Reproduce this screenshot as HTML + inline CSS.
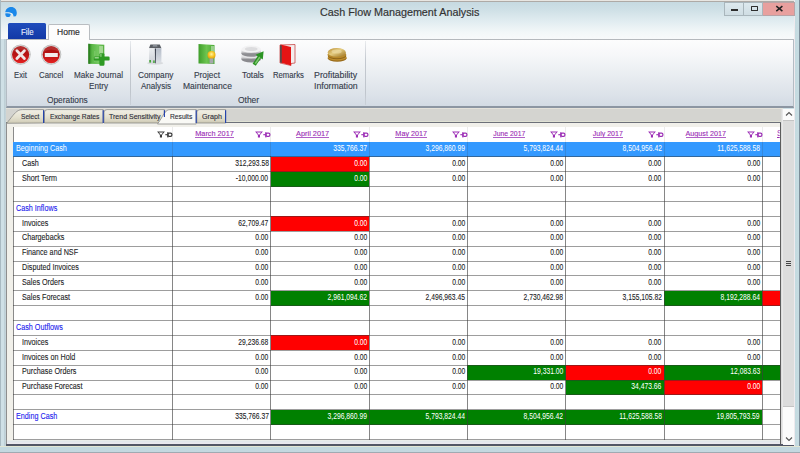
<!DOCTYPE html>
<html><head><meta charset="utf-8"><style>
html,body{margin:0;padding:0;width:800px;height:453px;overflow:hidden;background:#cddfe5;font-family:"Liberation Sans", sans-serif;position:relative}
</style></head><body>
<div style="position:absolute;left:0px;top:0px;width:800px;height:39px;background:linear-gradient(#c4d8e0 0px,#cfe0e6 10px,#e2edf1 22px,#f2f7f8 32px,#f8fafb 39px);"></div>
<div style="position:absolute;left:0px;top:0px;width:800px;height:2px;background:linear-gradient(#e8e6e2 0px,#e8e6e2 0.8px,#aeaaa6 0.8px,#aeaaa6 2px);"></div>
<div style="position:absolute;left:0px;top:39px;width:5.6px;height:414px;background:linear-gradient(90deg,#cfe0e6 0px,#cfe0e6 3.8px,#bccdd4 4.6px,#c4d4da 5.6px);"></div>
<div style="position:absolute;left:0px;top:0px;width:1px;height:453px;background:#a9bac2;"></div>
<div style="position:absolute;left:794.4px;top:0px;width:5.6px;height:453px;background:linear-gradient(90deg,#eeeaee 0px,#eeeaee 0.5px,#c4dae0 0.8px,#c6dce2 4.6px,#7c8c98 4.8px);"></div>
<div style="position:absolute;left:0px;top:445.5px;width:800px;height:7.5px;background:linear-gradient(#e2e6d4 0px,#e2e6d4 1px,#c2d8e0 1px,#c4d8e0 5.5px,#a0aab2 5.5px);"></div>
<svg style="position:absolute;left:0;top:0" width="20" height="20" viewBox="0 0 20 20">
<path d="M5.2 13.2 C5.2 9.4 7.8 7 11.2 7 C14.6 7 16.8 9.6 16.8 12.8 C16.8 14.3 16.4 15.4 15.8 16.2 L13.4 16.6 C13 15 12.2 13.8 11 13.6 L10 16.4 C8.8 17.1 7.4 17.2 6.5 16.8 C5.6 15.9 5.2 14.8 5.2 13.2 Z" fill="#1b88ea"/>
<path d="M5.0 12.3 C8 11.9 10.5 12.3 12.2 13.3 C13 14.1 13.4 15.2 13.6 16.5 L12.8 16.6 C12.5 15.5 12.0 14.7 11.3 14.2 C9.8 13.3 7.6 13.1 5.2 13.4 Z" fill="#e4eef2"/>
</svg>
<div style="position:absolute;top:6.79px;font-size:11px;line-height:11px;color:#333333;white-space:nowrap;-webkit-text-stroke:0.18px #333333;left:320.00px;transform-origin:0 0;transform:scaleX(0.9801);">Cash Flow Management Analysis</div>
<div style="position:absolute;left:724px;top:1.5px;width:20.3px;height:14.8px;background:linear-gradient(#dde9ee,#cfdde3);border:1px solid #a9b6bc;box-sizing:border-box;"></div>
<div style="position:absolute;left:744.3px;top:1.5px;width:18.6px;height:14.8px;background:linear-gradient(#dde9ee,#cfdde3);border:1px solid #a9b6bc;border-left:none;box-sizing:border-box;"></div>
<div style="position:absolute;left:762.9px;top:1.5px;width:32.6px;height:14.8px;background:#e8a09e;border:1px solid #b9a3a6;border-left:none;box-sizing:border-box;"></div>
<div style="position:absolute;left:731px;top:9.4px;width:7px;height:1.7px;background:#2e2e2e;"></div>
<div style="position:absolute;left:751px;top:6.2px;width:6.6px;height:4.9px;border:1.4px solid #2e2e2e;box-sizing:border-box;border-top-width:1.9px;border-radius:0.6px;"></div>
<svg style="position:absolute;left:775px;top:5px" width="9" height="7" viewBox="0 0 9 7"><path d="M1.3 1.2 L7.4 6.2 M7.4 1.2 L1.3 6.2" stroke="#222" stroke-width="1.5"/></svg>
<div style="position:absolute;left:5.6px;top:106px;width:777px;height:16.5px;background:linear-gradient(#8c96a2 0px,#8c96a2 2px,#e4e2da 2px,#e4e2da 3px,#d4d4d0 3px,#d4d4d0 14.5px,#e0e2d4 14.5px);"></div>
<div style="position:absolute;left:5.6px;top:38.8px;width:788.8px;height:69.2px;background:linear-gradient(#fdfdfd 0px,#f6f7f9 15px,#e9edf1 35px,#dce2e9 55px,#d3dbe4 66px);border-top:1px solid #b5b9bd;border-bottom:2px solid #8c96a2;border-left:1px solid #b4bcc4;border-right:1px solid #b4bcc4;box-sizing:border-box;"></div>
<div style="position:absolute;left:7.5px;top:23px;width:38.1px;height:16.3px;background:linear-gradient(#1f4cbc,#1239a6);border-radius:1.5px 1.5px 0 0;"></div>
<div style="position:absolute;top:27.59px;font-size:8.4px;line-height:8.4px;color:#e8eefc;white-space:nowrap;-webkit-text-stroke:0.12px #e8eefc;left:20.70px;transform-origin:0 0;transform:scaleX(0.9383);">File</div>
<div style="position:absolute;left:47.5px;top:23.6px;width:42.8px;height:16.5px;background:#fdfdfd;border:1px solid #b9bdc1;border-bottom:none;border-radius:2px 2px 0 0;box-sizing:border-box;"></div>
<div style="position:absolute;top:27.99px;font-size:8.4px;line-height:8.4px;color:#2e2e2e;white-space:nowrap;-webkit-text-stroke:0.16px #2e2e2e;left:57.40px;transform-origin:0 0;transform:scaleX(1.0175);">Home</div>
<div style="position:absolute;left:130.3px;top:41px;width:1px;height:63.5px;background:linear-gradient(rgba(190,196,204,0.3),#c3c8cf 30%,#bfc5cc 80%,rgba(190,196,204,0.5));"></div>
<div style="position:absolute;left:365.1px;top:41px;width:1px;height:63.5px;background:linear-gradient(rgba(190,196,204,0.3),#c3c8cf 30%,#bfc5cc 80%,rgba(190,196,204,0.5));"></div>
<div style="position:absolute;top:71.05px;font-size:8.8px;line-height:8.8px;color:#343b4a;white-space:nowrap;-webkit-text-stroke:0.12px #343b4a;left:13.80px;transform-origin:0 0;transform:scaleX(0.8862);">Exit</div>
<div style="position:absolute;top:71.05px;font-size:8.8px;line-height:8.8px;color:#343b4a;white-space:nowrap;-webkit-text-stroke:0.12px #343b4a;left:38.70px;transform-origin:0 0;transform:scaleX(0.8871);">Cancel</div>
<div style="position:absolute;top:71.05px;font-size:8.8px;line-height:8.8px;color:#343b4a;white-space:nowrap;-webkit-text-stroke:0.12px #343b4a;left:74.00px;transform-origin:0 0;transform:scaleX(0.9276);">Make Journal</div>
<div style="position:absolute;top:81.95px;font-size:8.8px;line-height:8.8px;color:#343b4a;white-space:nowrap;-webkit-text-stroke:0.12px #343b4a;left:89.00px;transform-origin:0 0;transform:scaleX(0.9250);">Entry</div>
<div style="position:absolute;top:95.65px;font-size:8.8px;line-height:8.8px;color:#343b4a;white-space:nowrap;-webkit-text-stroke:0.12px #343b4a;left:47.00px;transform-origin:0 0;transform:scaleX(0.9478);">Operations</div>
<div style="position:absolute;top:71.05px;font-size:8.8px;line-height:8.8px;color:#343b4a;white-space:nowrap;-webkit-text-stroke:0.12px #343b4a;left:137.90px;transform-origin:0 0;transform:scaleX(0.9399);">Company</div>
<div style="position:absolute;top:81.95px;font-size:8.8px;line-height:8.8px;color:#343b4a;white-space:nowrap;-webkit-text-stroke:0.12px #343b4a;left:141.00px;transform-origin:0 0;transform:scaleX(0.9155);">Analysis</div>
<div style="position:absolute;top:71.05px;font-size:8.8px;line-height:8.8px;color:#343b4a;white-space:nowrap;-webkit-text-stroke:0.12px #343b4a;left:194.00px;transform-origin:0 0;transform:scaleX(0.9493);">Project</div>
<div style="position:absolute;top:81.95px;font-size:8.8px;line-height:8.8px;color:#343b4a;white-space:nowrap;-webkit-text-stroke:0.12px #343b4a;left:183.00px;transform-origin:0 0;transform:scaleX(0.9704);">Maintenance</div>
<div style="position:absolute;top:71.05px;font-size:8.8px;line-height:8.8px;color:#343b4a;white-space:nowrap;-webkit-text-stroke:0.12px #343b4a;left:241.60px;transform-origin:0 0;transform:scaleX(0.9483);">Totals</div>
<div style="position:absolute;top:71.05px;font-size:8.8px;line-height:8.8px;color:#343b4a;white-space:nowrap;-webkit-text-stroke:0.12px #343b4a;left:272.80px;transform-origin:0 0;transform:scaleX(0.8777);">Remarks</div>
<div style="position:absolute;top:71.05px;font-size:8.8px;line-height:8.8px;color:#343b4a;white-space:nowrap;-webkit-text-stroke:0.12px #343b4a;left:314.40px;transform-origin:0 0;transform:scaleX(1.0038);">Profitability</div>
<div style="position:absolute;top:81.95px;font-size:8.8px;line-height:8.8px;color:#343b4a;white-space:nowrap;-webkit-text-stroke:0.12px #343b4a;left:313.50px;transform-origin:0 0;transform:scaleX(0.9927);">Information</div>
<div style="position:absolute;top:95.65px;font-size:8.8px;line-height:8.8px;color:#343b4a;white-space:nowrap;-webkit-text-stroke:0.12px #343b4a;left:237.90px;transform-origin:0 0;transform:scaleX(0.9587);">Other</div>
<svg style="position:absolute;left:10px;top:44px" width="22" height="22" viewBox="0 0 22 22">
<defs><linearGradient id="rg1" x1="0" x2="0" y1="0" y2="1"><stop offset="0" stop-color="#a81010"/><stop offset="0.5" stop-color="#b81414"/><stop offset="1" stop-color="#e42020"/></linearGradient></defs>
<circle cx="10.65" cy="10.6" r="10.1" fill="#bcbcbc"/>
<circle cx="10.65" cy="10.6" r="9.3" fill="#dedede"/>
<circle cx="10.65" cy="10.6" r="8.6" fill="url(#rg1)"/>
<path d="M2.5 8 Q10.65 3 18.8 8 Q17 2 10.65 1.9 Q4.3 2 2.5 8Z" fill="#fff" opacity="0.12"/>
<path d="M6.9 6.7 L14.4 14.4 M14.4 6.7 L6.9 14.4" stroke="#efe6e6" stroke-width="2.8" stroke-linecap="round"/>
</svg>
<svg style="position:absolute;left:40px;top:44px" width="22" height="22" viewBox="0 0 22 22">
<defs><linearGradient id="rg2" x1="0" x2="0" y1="0" y2="1"><stop offset="0" stop-color="#a81010"/><stop offset="0.5" stop-color="#b81414"/><stop offset="1" stop-color="#e42020"/></linearGradient></defs>
<circle cx="11.2" cy="10.6" r="10.1" fill="#bcbcbc"/>
<circle cx="11.2" cy="10.6" r="9.3" fill="#dedede"/>
<circle cx="11.2" cy="10.6" r="8.6" fill="url(#rg2)"/>
<path d="M3 8 Q11.2 3 19.4 8 Q17.5 2 11.2 1.9 Q4.9 2 3 8Z" fill="#fff" opacity="0.12"/>
<rect x="4.8" y="9" width="13" height="4" fill="#f2ecec"/>
</svg>
<svg style="position:absolute;left:87px;top:43px" width="24" height="24" viewBox="0 0 24 24">
<defs><linearGradient id="gb1" x1="0" x2="1"><stop offset="0" stop-color="#2f8a22"/><stop offset="0.25" stop-color="#5cb848"/><stop offset="0.6" stop-color="#74c860"/><stop offset="1" stop-color="#56b040"/></linearGradient></defs>
<path d="M1.3 0.8 L17.3 1.8 L17.3 21.2 L1.3 20.8 Z" fill="url(#gb1)"/>
<path d="M1.3 0.8 L3.2 1.0 L3.2 20.9 L1.3 20.8 Z" fill="#2a7a1e" opacity="0.7"/>
<rect x="12.2" y="3" width="3.8" height="10" fill="#b8e2a8" opacity="0.75"/>
<rect x="7.2" y="8" width="1.2" height="11" fill="#8ed07a" opacity="0.5"/>
<rect x="6.8" y="13.6" width="15.8" height="4" rx="1.2" fill="#2e9a24"/>
<rect x="12.4" y="10.2" width="5" height="12.6" rx="1" fill="#2e9a24"/>
<rect x="7.6" y="14.1" width="4.2" height="1.4" fill="#c0e8b0" opacity="0.8"/>
<rect x="13.2" y="10.8" width="1.4" height="3" fill="#a8dc98" opacity="0.7"/>
</svg>
<svg style="position:absolute;left:146px;top:43px" width="18" height="22" viewBox="0 0 18 22">
<defs><linearGradient id="lf" x1="0" x2="0" y1="0" y2="1"><stop offset="0" stop-color="#f0f2f4"/><stop offset="1" stop-color="#c8ccd2"/></linearGradient>
<linearGradient id="rf" x1="0" x2="0" y1="0" y2="1"><stop offset="0" stop-color="#b4bcc8"/><stop offset="1" stop-color="#dce0e6"/></linearGradient></defs>
<ellipse cx="9.2" cy="20.2" rx="8" ry="1.6" fill="#d2d4d8" opacity="0.8"/>
<path d="M4.4 1.4 L13.8 1.4 L15.4 5.2 L3 5.2 Z" fill="#5a5e64"/>
<path d="M7 2.2 L11 2.2 L11.6 3.6 L6.6 3.6 Z" fill="#9aa0a8"/>
<path d="M3 5.2 L9.3 5.6 L9.3 20.2 L3 19.2 Z" fill="url(#lf)"/>
<path d="M9.3 5.6 L15.4 5.2 L15.4 19.2 L9.3 20.2 Z" fill="url(#rf)"/>
<path d="M5.2 6 L5.2 18 M7.2 6 L7.2 18" stroke="#d8dce2" stroke-width="0.5"/>
<path d="M8.8 5.6 L10 5.6 L9.8 20.2 L9.1 20.2 Z" fill="#3c4250"/>
<rect x="3.3" y="17" width="1.7" height="2.6" fill="#46a83a"/>
<rect x="7.2" y="17.4" width="1.5" height="2.6" fill="#46a83a"/>
</svg>
<svg style="position:absolute;left:197px;top:43px" width="22" height="24" viewBox="0 0 22 24">
<defs><linearGradient id="gb2" x1="0" x2="1"><stop offset="0" stop-color="#3f9e2a"/><stop offset="0.5" stop-color="#6cc450"/><stop offset="1" stop-color="#4aa836"/></linearGradient>
<radialGradient id="bulb" cx="0.5" cy="0.4" r="0.6"><stop offset="0" stop-color="#fff2a0"/><stop offset="0.6" stop-color="#f5c21c"/><stop offset="1" stop-color="#e09a10"/></radialGradient></defs>
<path d="M1.5 1 L17.5 2 L17.5 21 L1.5 20.5 Z" fill="url(#gb2)"/>
<rect x="14" y="3" width="3" height="8" fill="#c8e8c0" opacity="0.6"/>
<circle cx="14.5" cy="12" r="4" fill="url(#bulb)"/>
<rect x="12.6" y="15.5" width="3.8" height="5" fill="#a6a8ac"/>
</svg>
<svg style="position:absolute;left:240px;top:43px" width="25" height="24" viewBox="0 0 25 24">
<defs><linearGradient id="sv" x1="0" x2="0" y1="0" y2="1"><stop offset="0" stop-color="#fafafa"/><stop offset="0.6" stop-color="#d2d2d4"/><stop offset="1" stop-color="#9a9a9e"/></linearGradient></defs>
<ellipse cx="11.2" cy="16.2" rx="9.8" ry="3.4" fill="#8a8a8e"/>
<rect x="1.4" y="12" width="19.6" height="4.2" fill="url(#sv)"/>
<ellipse cx="11.2" cy="12" rx="9.8" ry="3.2" fill="#e4e4e6"/>
<ellipse cx="11.2" cy="10.6" rx="9.8" ry="3.2" fill="#8e8e92"/>
<rect x="1.4" y="6.2" width="19.6" height="4.4" fill="url(#sv)"/>
<ellipse cx="11.2" cy="6.2" rx="9.8" ry="3.6" fill="#f2f2f3"/>
<ellipse cx="11.2" cy="6.0" rx="6.4" ry="2.0" fill="#dcdcde"/>
<path d="M12.6 20.8 L17.6 13.2 L15.6 11.8 L23.6 8.2 L22.8 16.6 L20.8 15.2 L15.8 22.8 Z" fill="#2c9424"/>
<path d="M14.6 20.2 L19.2 13.6 L20.4 14.4 L16.0 21.0 Z" fill="#9ad888" opacity="0.75"/>
</svg>
<svg style="position:absolute;left:278px;top:43px" width="20" height="24" viewBox="0 0 20 24">
<path d="M2 2 L17 1.5 L17 20 L13 20.5 L13 22.5 L2 20 Z" fill="#f4eeee" stroke="#c84848" stroke-width="0.8"/>
<path d="M2.5 1.5 L13 4 L13 22.5 L2.5 19.5 Z" fill="#e41414"/>
<path d="M2 2 L3.8 2.4 L3.8 20 L2 19.6 Z" fill="#5a4a4a"/>
</svg>
<svg style="position:absolute;left:326px;top:46px" width="22" height="18" viewBox="0 0 22 18">
<defs><linearGradient id="gd" x1="0" x2="1" y1="0" y2="1"><stop offset="0" stop-color="#b88a30"/><stop offset="0.45" stop-color="#e4cc80"/><stop offset="1" stop-color="#9a7020"/></linearGradient></defs>
<ellipse cx="11.2" cy="12.2" rx="9.3" ry="3.6" fill="#9a6c1c"/>
<ellipse cx="11.2" cy="11.2" rx="9.3" ry="3.4" fill="#c09030"/>
<ellipse cx="11.0" cy="9.8" rx="9.3" ry="3.4" fill="#8e6418"/>
<ellipse cx="10.9" cy="8.6" rx="9.3" ry="3.6" fill="#b88a2c"/>
<ellipse cx="10.8" cy="6.4" rx="9.1" ry="4.4" fill="url(#gd)"/>
<ellipse cx="10.6" cy="5.4" rx="5" ry="2" fill="#f0e2b0" opacity="0.55"/>
</svg>
<div style="position:absolute;left:6.2px;top:122.1px;width:775px;height:322.5px;background:linear-gradient(#f1f0ea 0px,#f1f0ea 317px,#dfe6ea 318px,#ece8f0 321px);border-left:1px solid #8e8e8e;border-top:1.4px solid #6c7078;box-sizing:border-box;"></div>
<div style="position:absolute;left:6.2px;top:444.0px;width:788.2px;height:1.5px;background:#525666;"></div>
<div style="position:absolute;left:12.6px;top:126.5px;width:768.4px;height:313.5px;background:#fff;border-left:1px solid #8a8a8a;box-sizing:border-box;"></div>
<div style="position:absolute;left:780px;top:123.4px;width:1.0px;height:321px;background:#5c5c5c;"></div>
<div style="position:absolute;left:781px;top:109px;width:1.8px;height:335.2px;background:linear-gradient(90deg,#d6d6d6,#eeeeee);"></div>
<div style="position:absolute;left:782.6px;top:109px;width:11.8px;height:335.5px;background:#fbfbfb;"></div>
<div style="position:absolute;left:782.6px;top:120.2px;width:11.8px;height:287.2px;background:#dcdcdc;border-top:1px solid #c4c4c4;border-bottom:1px solid #c4c4c4;box-sizing:border-box;"></div>
<svg style="position:absolute;left:785px;top:111px" width="8" height="6" viewBox="0 0 8 6"><path d="M1 4.5 L4 1.5 L7 4.5" stroke="#555" stroke-width="1.1" fill="none"/></svg>
<svg style="position:absolute;left:785px;top:436px" width="8" height="6" viewBox="0 0 8 6"><path d="M1 1.5 L4 4.5 L7 1.5" stroke="#555" stroke-width="1.1" fill="none"/></svg>
<div style="position:absolute;left:786px;top:261px;width:5px;height:1px;background:#444;"></div>
<div style="position:absolute;left:786px;top:263px;width:5px;height:1px;background:#444;"></div>
<div style="position:absolute;left:786px;top:265px;width:5px;height:1px;background:#444;"></div>
<svg style="position:absolute;left:0;top:0" width="240" height="130" viewBox="0 0 240 130">
<defs><linearGradient id="tb" x1="0" x2="0" y1="0" y2="1"><stop offset="0" stop-color="#f2f0e6"/><stop offset="0.55" stop-color="#e4e1d0"/><stop offset="0.85" stop-color="#d7d3bf"/><stop offset="1" stop-color="#c9c5b0"/></linearGradient></defs>
<path d="M6.6 123.3 C11.5 117.5 14.5 112.6 18.2 110.6 Q19.8 109.6 22.5 109.6 L43.6 109.6 L43.6 123 Z" fill="url(#tb)" stroke="#8a8a88" stroke-width="0.8"/>
<path d="M44.5 123 L44.5 112 Q44.8 109.6 47.5 109.6 L103.2 109.6 L103.2 123 Z" fill="url(#tb)" stroke="#8a8a88" stroke-width="0.8"/>
<path d="M104 123 L104 112 Q104.3 109.6 107 109.6 L164.4 109.6 L164.4 123 Z" fill="url(#tb)" stroke="#8a8a88" stroke-width="0.8"/>
<path d="M196.8 123 L196.8 112 Q197.1 109.6 199.8 109.6 L225.6 109.6 L225.6 123 Z" fill="url(#tb)" stroke="#8a8a88" stroke-width="0.8"/>
<path d="M157.5 124 C161 119.5 163.5 113.5 166.5 110.8 Q167.8 109.6 170 109.6 L196.2 109.6 L196.2 124 Z" fill="#f9f9f5" stroke="#8a8a88" stroke-width="0.8"/>
<path d="M43.6 110.2 L43.6 123" stroke="#1f3fae" stroke-width="1.1"/>
<path d="M103.2 110.2 L103.2 123" stroke="#1f3fae" stroke-width="1.1"/>
<path d="M164.4 110.2 L164.4 117" stroke="#1f3fae" stroke-width="1.1"/>
<path d="M196.2 110.2 L196.2 123" stroke="#1f3fae" stroke-width="1.1"/>
<path d="M225.6 110.2 L225.6 123" stroke="#1f3fae" stroke-width="1.1"/>
</svg>
<div style="position:absolute;top:113.22px;font-size:7.3px;line-height:7.3px;color:#2e2e3a;white-space:nowrap;-webkit-text-stroke:0.12px #2e2e3a;left:21.40px;transform-origin:0 0;transform:scaleX(0.9019);">Select</div>
<div style="position:absolute;top:113.22px;font-size:7.3px;line-height:7.3px;color:#2e2e3a;white-space:nowrap;-webkit-text-stroke:0.12px #2e2e3a;left:49.50px;transform-origin:0 0;transform:scaleX(0.9241);">Exchange Rates</div>
<div style="position:absolute;top:113.22px;font-size:7.3px;line-height:7.3px;color:#2e2e3a;white-space:nowrap;-webkit-text-stroke:0.12px #2e2e3a;left:108.80px;transform-origin:0 0;transform:scaleX(0.9611);">Trend Sensitivity</div>
<div style="position:absolute;top:113.22px;font-size:7.3px;line-height:7.3px;color:#2e2e3a;white-space:nowrap;-webkit-text-stroke:0.12px #2e2e3a;left:170.30px;transform-origin:0 0;transform:scaleX(0.9161);">Results</div>
<div style="position:absolute;top:113.22px;font-size:7.3px;line-height:7.3px;color:#2e2e3a;white-space:nowrap;-webkit-text-stroke:0.12px #2e2e3a;left:202.00px;transform-origin:0 0;transform:scaleX(0.9808);">Graph</div>
<div style="position:absolute;left:13.2px;top:142.0px;width:767.0px;height:14.88px;background:#3399ff;"></div>
<div style="position:absolute;left:270.8px;top:156.88px;width:98.30000000000001px;height:14.88px;background:#ff0000;"></div>
<div style="position:absolute;left:270.8px;top:171.76px;width:98.30000000000001px;height:14.88px;background:#008000;"></div>
<div style="position:absolute;left:270.8px;top:216.4px;width:98.30000000000001px;height:14.88px;background:#ff0000;"></div>
<div style="position:absolute;left:270.8px;top:290.8px;width:98.30000000000001px;height:14.88px;background:#008000;"></div>
<div style="position:absolute;left:664.0px;top:290.8px;width:98.29999999999995px;height:14.88px;background:#008000;"></div>
<div style="position:absolute;left:762.3px;top:290.8px;width:17.90000000000009px;height:14.88px;background:#ff0000;"></div>
<div style="position:absolute;left:270.8px;top:335.44px;width:98.30000000000001px;height:14.88px;background:#ff0000;"></div>
<div style="position:absolute;left:467.4px;top:365.20000000000005px;width:98.30000000000007px;height:14.88px;background:#008000;"></div>
<div style="position:absolute;left:565.7px;top:365.20000000000005px;width:98.29999999999995px;height:14.88px;background:#ff0000;"></div>
<div style="position:absolute;left:664.0px;top:365.20000000000005px;width:98.29999999999995px;height:14.88px;background:#008000;"></div>
<div style="position:absolute;left:762.3px;top:365.20000000000005px;width:17.90000000000009px;height:14.88px;background:#008000;"></div>
<div style="position:absolute;left:565.7px;top:380.08000000000004px;width:98.29999999999995px;height:14.88px;background:#008000;"></div>
<div style="position:absolute;left:664.0px;top:380.08000000000004px;width:98.29999999999995px;height:14.88px;background:#ff0000;"></div>
<div style="position:absolute;left:270.8px;top:409.84000000000003px;width:98.30000000000001px;height:14.88px;background:#008000;"></div>
<div style="position:absolute;left:369.1px;top:409.84000000000003px;width:98.29999999999995px;height:14.88px;background:#008000;"></div>
<div style="position:absolute;left:467.4px;top:409.84000000000003px;width:98.30000000000007px;height:14.88px;background:#008000;"></div>
<div style="position:absolute;left:565.7px;top:409.84000000000003px;width:98.29999999999995px;height:14.88px;background:#008000;"></div>
<div style="position:absolute;left:664.0px;top:409.84000000000003px;width:98.29999999999995px;height:14.88px;background:#008000;"></div>
<div style="position:absolute;left:13.2px;top:156.38px;width:767.0px;height:1px;background:rgba(50,50,50,0.48);"></div>
<div style="position:absolute;left:13.2px;top:171.26px;width:767.0px;height:1px;background:rgba(50,50,50,0.48);"></div>
<div style="position:absolute;left:13.2px;top:186.14px;width:767.0px;height:1px;background:rgba(50,50,50,0.48);"></div>
<div style="position:absolute;left:13.2px;top:201.02px;width:767.0px;height:1px;background:rgba(50,50,50,0.48);"></div>
<div style="position:absolute;left:13.2px;top:215.9px;width:767.0px;height:1px;background:rgba(50,50,50,0.48);"></div>
<div style="position:absolute;left:13.2px;top:230.78px;width:767.0px;height:1px;background:rgba(50,50,50,0.48);"></div>
<div style="position:absolute;left:13.2px;top:245.66000000000003px;width:767.0px;height:1px;background:rgba(50,50,50,0.48);"></div>
<div style="position:absolute;left:13.2px;top:260.54px;width:767.0px;height:1px;background:rgba(50,50,50,0.48);"></div>
<div style="position:absolute;left:13.2px;top:275.42px;width:767.0px;height:1px;background:rgba(50,50,50,0.48);"></div>
<div style="position:absolute;left:13.2px;top:290.3px;width:767.0px;height:1px;background:rgba(50,50,50,0.48);"></div>
<div style="position:absolute;left:13.2px;top:305.18px;width:767.0px;height:1px;background:rgba(50,50,50,0.48);"></div>
<div style="position:absolute;left:13.2px;top:320.06px;width:767.0px;height:1px;background:rgba(50,50,50,0.48);"></div>
<div style="position:absolute;left:13.2px;top:334.94px;width:767.0px;height:1px;background:rgba(50,50,50,0.48);"></div>
<div style="position:absolute;left:13.2px;top:349.82000000000005px;width:767.0px;height:1px;background:rgba(50,50,50,0.48);"></div>
<div style="position:absolute;left:13.2px;top:364.70000000000005px;width:767.0px;height:1px;background:rgba(50,50,50,0.48);"></div>
<div style="position:absolute;left:13.2px;top:379.58000000000004px;width:767.0px;height:1px;background:rgba(50,50,50,0.48);"></div>
<div style="position:absolute;left:13.2px;top:394.46000000000004px;width:767.0px;height:1px;background:rgba(50,50,50,0.48);"></div>
<div style="position:absolute;left:13.2px;top:409.34000000000003px;width:767.0px;height:1px;background:rgba(50,50,50,0.48);"></div>
<div style="position:absolute;left:13.2px;top:424.22px;width:767.0px;height:1px;background:rgba(50,50,50,0.48);"></div>
<div style="position:absolute;left:13.2px;top:439.1px;width:767.0px;height:1px;background:rgba(50,50,50,0.48);"></div>
<div style="position:absolute;left:172.0px;top:142.0px;width:1px;height:297.6px;background:rgba(60,60,60,0.62);"></div>
<div style="position:absolute;left:172.0px;top:126.6px;width:1px;height:15.400000000000006px;background:#ececec;"></div>
<div style="position:absolute;left:270.3px;top:142.0px;width:1px;height:297.6px;background:rgba(60,60,60,0.62);"></div>
<div style="position:absolute;left:270.3px;top:126.6px;width:1px;height:15.400000000000006px;background:#ececec;"></div>
<div style="position:absolute;left:368.6px;top:142.0px;width:1px;height:297.6px;background:rgba(60,60,60,0.62);"></div>
<div style="position:absolute;left:368.6px;top:126.6px;width:1px;height:15.400000000000006px;background:#ececec;"></div>
<div style="position:absolute;left:466.9px;top:142.0px;width:1px;height:297.6px;background:rgba(60,60,60,0.62);"></div>
<div style="position:absolute;left:466.9px;top:126.6px;width:1px;height:15.400000000000006px;background:#ececec;"></div>
<div style="position:absolute;left:565.2px;top:142.0px;width:1px;height:297.6px;background:rgba(60,60,60,0.62);"></div>
<div style="position:absolute;left:565.2px;top:126.6px;width:1px;height:15.400000000000006px;background:#ececec;"></div>
<div style="position:absolute;left:663.5px;top:142.0px;width:1px;height:297.6px;background:rgba(60,60,60,0.62);"></div>
<div style="position:absolute;left:663.5px;top:126.6px;width:1px;height:15.400000000000006px;background:#ececec;"></div>
<div style="position:absolute;left:761.8px;top:142.0px;width:1px;height:297.6px;background:rgba(60,60,60,0.62);"></div>
<div style="position:absolute;left:761.8px;top:126.6px;width:1px;height:15.400000000000006px;background:#ececec;"></div>
<div style="position:absolute;left:13.2px;top:142.0px;width:767.0px;height:14.38px;background:rgba(51,153,255,0.72);"></div>
<div style="position:absolute;top:144.19px;font-size:8.4px;line-height:8.4px;color:#fff;white-space:nowrap;-webkit-text-stroke:0.03px #fff;left:15.70px;transform-origin:0 0;transform:scaleX(0.8600);">Beginning Cash</div>
<div style="position:absolute;top:144.19px;font-size:8.4px;line-height:8.4px;color:#fff;white-space:nowrap;-webkit-text-stroke:0.03px #fff;left:324.86px;transform-origin:100% 0;transform:scaleX(0.8050);">335,766.37</div>
<div style="position:absolute;top:144.19px;font-size:8.4px;line-height:8.4px;color:#fff;white-space:nowrap;-webkit-text-stroke:0.03px #fff;left:416.15px;transform-origin:100% 0;transform:scaleX(0.8050);">3,296,860.99</div>
<div style="position:absolute;top:144.19px;font-size:8.4px;line-height:8.4px;color:#fff;white-space:nowrap;-webkit-text-stroke:0.03px #fff;left:514.45px;transform-origin:100% 0;transform:scaleX(0.8050);">5,793,824.44</div>
<div style="position:absolute;top:144.19px;font-size:8.4px;line-height:8.4px;color:#fff;white-space:nowrap;-webkit-text-stroke:0.03px #fff;left:612.75px;transform-origin:100% 0;transform:scaleX(0.8050);">8,504,956.42</div>
<div style="position:absolute;top:144.19px;font-size:8.4px;line-height:8.4px;color:#fff;white-space:nowrap;-webkit-text-stroke:0.03px #fff;left:707.00px;transform-origin:100% 0;transform:scaleX(0.8050);">11,625,588.58</div>
<div style="position:absolute;top:159.07px;font-size:8.4px;line-height:8.4px;color:#1c1c24;white-space:nowrap;-webkit-text-stroke:0.1px #1c1c24;left:21.60px;transform-origin:0 0;transform:scaleX(0.8600);">Cash</div>
<div style="position:absolute;top:159.07px;font-size:8.4px;line-height:8.4px;color:#1c1c24;white-space:nowrap;-webkit-text-stroke:0.1px #1c1c24;left:226.56px;transform-origin:100% 0;transform:scaleX(0.8050);">312,293.58</div>
<div style="position:absolute;top:159.07px;font-size:8.4px;line-height:8.4px;color:#fff;white-space:nowrap;-webkit-text-stroke:0.03px #fff;left:350.55px;transform-origin:100% 0;transform:scaleX(0.8050);">0.00</div>
<div style="position:absolute;top:159.07px;font-size:8.4px;line-height:8.4px;color:#1c1c24;white-space:nowrap;-webkit-text-stroke:0.1px #1c1c24;left:448.85px;transform-origin:100% 0;transform:scaleX(0.8050);">0.00</div>
<div style="position:absolute;top:159.07px;font-size:8.4px;line-height:8.4px;color:#1c1c24;white-space:nowrap;-webkit-text-stroke:0.1px #1c1c24;left:547.15px;transform-origin:100% 0;transform:scaleX(0.8050);">0.00</div>
<div style="position:absolute;top:159.07px;font-size:8.4px;line-height:8.4px;color:#1c1c24;white-space:nowrap;-webkit-text-stroke:0.1px #1c1c24;left:645.45px;transform-origin:100% 0;transform:scaleX(0.8050);">0.00</div>
<div style="position:absolute;top:159.07px;font-size:8.4px;line-height:8.4px;color:#1c1c24;white-space:nowrap;-webkit-text-stroke:0.1px #1c1c24;left:743.75px;transform-origin:100% 0;transform:scaleX(0.8050);">0.00</div>
<div style="position:absolute;top:173.95px;font-size:8.4px;line-height:8.4px;color:#1c1c24;white-space:nowrap;-webkit-text-stroke:0.1px #1c1c24;left:21.60px;transform-origin:0 0;transform:scaleX(0.8600);">Short Term</div>
<div style="position:absolute;top:173.95px;font-size:8.4px;line-height:8.4px;color:#1c1c24;white-space:nowrap;-webkit-text-stroke:0.1px #1c1c24;left:228.43px;transform-origin:100% 0;transform:scaleX(0.8050);">-10,000.00</div>
<div style="position:absolute;top:173.95px;font-size:8.4px;line-height:8.4px;color:#fff;white-space:nowrap;-webkit-text-stroke:0.03px #fff;left:350.55px;transform-origin:100% 0;transform:scaleX(0.8050);">0.00</div>
<div style="position:absolute;top:173.95px;font-size:8.4px;line-height:8.4px;color:#1c1c24;white-space:nowrap;-webkit-text-stroke:0.1px #1c1c24;left:448.85px;transform-origin:100% 0;transform:scaleX(0.8050);">0.00</div>
<div style="position:absolute;top:173.95px;font-size:8.4px;line-height:8.4px;color:#1c1c24;white-space:nowrap;-webkit-text-stroke:0.1px #1c1c24;left:547.15px;transform-origin:100% 0;transform:scaleX(0.8050);">0.00</div>
<div style="position:absolute;top:173.95px;font-size:8.4px;line-height:8.4px;color:#1c1c24;white-space:nowrap;-webkit-text-stroke:0.1px #1c1c24;left:645.45px;transform-origin:100% 0;transform:scaleX(0.8050);">0.00</div>
<div style="position:absolute;top:173.95px;font-size:8.4px;line-height:8.4px;color:#1c1c24;white-space:nowrap;-webkit-text-stroke:0.1px #1c1c24;left:743.75px;transform-origin:100% 0;transform:scaleX(0.8050);">0.00</div>
<div style="position:absolute;top:203.71px;font-size:8.4px;line-height:8.4px;color:#2222ee;white-space:nowrap;-webkit-text-stroke:0.1px #2222ee;left:15.70px;transform-origin:0 0;transform:scaleX(0.8600);">Cash Inflows</div>
<div style="position:absolute;top:218.59px;font-size:8.4px;line-height:8.4px;color:#1c1c24;white-space:nowrap;-webkit-text-stroke:0.1px #1c1c24;left:21.60px;transform-origin:0 0;transform:scaleX(0.8600);">Invoices</div>
<div style="position:absolute;top:218.59px;font-size:8.4px;line-height:8.4px;color:#1c1c24;white-space:nowrap;-webkit-text-stroke:0.1px #1c1c24;left:231.23px;transform-origin:100% 0;transform:scaleX(0.8050);">62,709.47</div>
<div style="position:absolute;top:218.59px;font-size:8.4px;line-height:8.4px;color:#fff;white-space:nowrap;-webkit-text-stroke:0.03px #fff;left:350.55px;transform-origin:100% 0;transform:scaleX(0.8050);">0.00</div>
<div style="position:absolute;top:218.59px;font-size:8.4px;line-height:8.4px;color:#1c1c24;white-space:nowrap;-webkit-text-stroke:0.1px #1c1c24;left:448.85px;transform-origin:100% 0;transform:scaleX(0.8050);">0.00</div>
<div style="position:absolute;top:218.59px;font-size:8.4px;line-height:8.4px;color:#1c1c24;white-space:nowrap;-webkit-text-stroke:0.1px #1c1c24;left:547.15px;transform-origin:100% 0;transform:scaleX(0.8050);">0.00</div>
<div style="position:absolute;top:218.59px;font-size:8.4px;line-height:8.4px;color:#1c1c24;white-space:nowrap;-webkit-text-stroke:0.1px #1c1c24;left:645.45px;transform-origin:100% 0;transform:scaleX(0.8050);">0.00</div>
<div style="position:absolute;top:218.59px;font-size:8.4px;line-height:8.4px;color:#1c1c24;white-space:nowrap;-webkit-text-stroke:0.1px #1c1c24;left:743.75px;transform-origin:100% 0;transform:scaleX(0.8050);">0.00</div>
<div style="position:absolute;top:233.47px;font-size:8.4px;line-height:8.4px;color:#1c1c24;white-space:nowrap;-webkit-text-stroke:0.1px #1c1c24;left:21.60px;transform-origin:0 0;transform:scaleX(0.8600);">Chargebacks</div>
<div style="position:absolute;top:233.47px;font-size:8.4px;line-height:8.4px;color:#1c1c24;white-space:nowrap;-webkit-text-stroke:0.1px #1c1c24;left:252.25px;transform-origin:100% 0;transform:scaleX(0.8050);">0.00</div>
<div style="position:absolute;top:233.47px;font-size:8.4px;line-height:8.4px;color:#1c1c24;white-space:nowrap;-webkit-text-stroke:0.1px #1c1c24;left:350.55px;transform-origin:100% 0;transform:scaleX(0.8050);">0.00</div>
<div style="position:absolute;top:233.47px;font-size:8.4px;line-height:8.4px;color:#1c1c24;white-space:nowrap;-webkit-text-stroke:0.1px #1c1c24;left:448.85px;transform-origin:100% 0;transform:scaleX(0.8050);">0.00</div>
<div style="position:absolute;top:233.47px;font-size:8.4px;line-height:8.4px;color:#1c1c24;white-space:nowrap;-webkit-text-stroke:0.1px #1c1c24;left:547.15px;transform-origin:100% 0;transform:scaleX(0.8050);">0.00</div>
<div style="position:absolute;top:233.47px;font-size:8.4px;line-height:8.4px;color:#1c1c24;white-space:nowrap;-webkit-text-stroke:0.1px #1c1c24;left:645.45px;transform-origin:100% 0;transform:scaleX(0.8050);">0.00</div>
<div style="position:absolute;top:233.47px;font-size:8.4px;line-height:8.4px;color:#1c1c24;white-space:nowrap;-webkit-text-stroke:0.1px #1c1c24;left:743.75px;transform-origin:100% 0;transform:scaleX(0.8050);">0.00</div>
<div style="position:absolute;top:248.35px;font-size:8.4px;line-height:8.4px;color:#1c1c24;white-space:nowrap;-webkit-text-stroke:0.1px #1c1c24;left:21.60px;transform-origin:0 0;transform:scaleX(0.8600);">Finance and NSF</div>
<div style="position:absolute;top:248.35px;font-size:8.4px;line-height:8.4px;color:#1c1c24;white-space:nowrap;-webkit-text-stroke:0.1px #1c1c24;left:252.25px;transform-origin:100% 0;transform:scaleX(0.8050);">0.00</div>
<div style="position:absolute;top:248.35px;font-size:8.4px;line-height:8.4px;color:#1c1c24;white-space:nowrap;-webkit-text-stroke:0.1px #1c1c24;left:350.55px;transform-origin:100% 0;transform:scaleX(0.8050);">0.00</div>
<div style="position:absolute;top:248.35px;font-size:8.4px;line-height:8.4px;color:#1c1c24;white-space:nowrap;-webkit-text-stroke:0.1px #1c1c24;left:448.85px;transform-origin:100% 0;transform:scaleX(0.8050);">0.00</div>
<div style="position:absolute;top:248.35px;font-size:8.4px;line-height:8.4px;color:#1c1c24;white-space:nowrap;-webkit-text-stroke:0.1px #1c1c24;left:547.15px;transform-origin:100% 0;transform:scaleX(0.8050);">0.00</div>
<div style="position:absolute;top:248.35px;font-size:8.4px;line-height:8.4px;color:#1c1c24;white-space:nowrap;-webkit-text-stroke:0.1px #1c1c24;left:645.45px;transform-origin:100% 0;transform:scaleX(0.8050);">0.00</div>
<div style="position:absolute;top:248.35px;font-size:8.4px;line-height:8.4px;color:#1c1c24;white-space:nowrap;-webkit-text-stroke:0.1px #1c1c24;left:743.75px;transform-origin:100% 0;transform:scaleX(0.8050);">0.00</div>
<div style="position:absolute;top:263.23px;font-size:8.4px;line-height:8.4px;color:#1c1c24;white-space:nowrap;-webkit-text-stroke:0.1px #1c1c24;left:21.60px;transform-origin:0 0;transform:scaleX(0.8600);">Disputed Invoices</div>
<div style="position:absolute;top:263.23px;font-size:8.4px;line-height:8.4px;color:#1c1c24;white-space:nowrap;-webkit-text-stroke:0.1px #1c1c24;left:252.25px;transform-origin:100% 0;transform:scaleX(0.8050);">0.00</div>
<div style="position:absolute;top:263.23px;font-size:8.4px;line-height:8.4px;color:#1c1c24;white-space:nowrap;-webkit-text-stroke:0.1px #1c1c24;left:350.55px;transform-origin:100% 0;transform:scaleX(0.8050);">0.00</div>
<div style="position:absolute;top:263.23px;font-size:8.4px;line-height:8.4px;color:#1c1c24;white-space:nowrap;-webkit-text-stroke:0.1px #1c1c24;left:448.85px;transform-origin:100% 0;transform:scaleX(0.8050);">0.00</div>
<div style="position:absolute;top:263.23px;font-size:8.4px;line-height:8.4px;color:#1c1c24;white-space:nowrap;-webkit-text-stroke:0.1px #1c1c24;left:547.15px;transform-origin:100% 0;transform:scaleX(0.8050);">0.00</div>
<div style="position:absolute;top:263.23px;font-size:8.4px;line-height:8.4px;color:#1c1c24;white-space:nowrap;-webkit-text-stroke:0.1px #1c1c24;left:645.45px;transform-origin:100% 0;transform:scaleX(0.8050);">0.00</div>
<div style="position:absolute;top:263.23px;font-size:8.4px;line-height:8.4px;color:#1c1c24;white-space:nowrap;-webkit-text-stroke:0.1px #1c1c24;left:743.75px;transform-origin:100% 0;transform:scaleX(0.8050);">0.00</div>
<div style="position:absolute;top:278.11px;font-size:8.4px;line-height:8.4px;color:#1c1c24;white-space:nowrap;-webkit-text-stroke:0.1px #1c1c24;left:21.60px;transform-origin:0 0;transform:scaleX(0.8600);">Sales Orders</div>
<div style="position:absolute;top:278.11px;font-size:8.4px;line-height:8.4px;color:#1c1c24;white-space:nowrap;-webkit-text-stroke:0.1px #1c1c24;left:252.25px;transform-origin:100% 0;transform:scaleX(0.8050);">0.00</div>
<div style="position:absolute;top:278.11px;font-size:8.4px;line-height:8.4px;color:#1c1c24;white-space:nowrap;-webkit-text-stroke:0.1px #1c1c24;left:350.55px;transform-origin:100% 0;transform:scaleX(0.8050);">0.00</div>
<div style="position:absolute;top:278.11px;font-size:8.4px;line-height:8.4px;color:#1c1c24;white-space:nowrap;-webkit-text-stroke:0.1px #1c1c24;left:448.85px;transform-origin:100% 0;transform:scaleX(0.8050);">0.00</div>
<div style="position:absolute;top:278.11px;font-size:8.4px;line-height:8.4px;color:#1c1c24;white-space:nowrap;-webkit-text-stroke:0.1px #1c1c24;left:547.15px;transform-origin:100% 0;transform:scaleX(0.8050);">0.00</div>
<div style="position:absolute;top:278.11px;font-size:8.4px;line-height:8.4px;color:#1c1c24;white-space:nowrap;-webkit-text-stroke:0.1px #1c1c24;left:645.45px;transform-origin:100% 0;transform:scaleX(0.8050);">0.00</div>
<div style="position:absolute;top:278.11px;font-size:8.4px;line-height:8.4px;color:#1c1c24;white-space:nowrap;-webkit-text-stroke:0.1px #1c1c24;left:743.75px;transform-origin:100% 0;transform:scaleX(0.8050);">0.00</div>
<div style="position:absolute;top:292.99px;font-size:8.4px;line-height:8.4px;color:#1c1c24;white-space:nowrap;-webkit-text-stroke:0.1px #1c1c24;left:21.60px;transform-origin:0 0;transform:scaleX(0.8600);">Sales Forecast</div>
<div style="position:absolute;top:292.99px;font-size:8.4px;line-height:8.4px;color:#1c1c24;white-space:nowrap;-webkit-text-stroke:0.1px #1c1c24;left:252.25px;transform-origin:100% 0;transform:scaleX(0.8050);">0.00</div>
<div style="position:absolute;top:292.99px;font-size:8.4px;line-height:8.4px;color:#fff;white-space:nowrap;-webkit-text-stroke:0.03px #fff;left:317.85px;transform-origin:100% 0;transform:scaleX(0.8050);">2,961,094.62</div>
<div style="position:absolute;top:292.99px;font-size:8.4px;line-height:8.4px;color:#1c1c24;white-space:nowrap;-webkit-text-stroke:0.1px #1c1c24;left:416.15px;transform-origin:100% 0;transform:scaleX(0.8050);">2,496,963.45</div>
<div style="position:absolute;top:292.99px;font-size:8.4px;line-height:8.4px;color:#1c1c24;white-space:nowrap;-webkit-text-stroke:0.1px #1c1c24;left:514.45px;transform-origin:100% 0;transform:scaleX(0.8050);">2,730,462.98</div>
<div style="position:absolute;top:292.99px;font-size:8.4px;line-height:8.4px;color:#1c1c24;white-space:nowrap;-webkit-text-stroke:0.1px #1c1c24;left:612.75px;transform-origin:100% 0;transform:scaleX(0.8050);">3,155,105.82</div>
<div style="position:absolute;top:292.99px;font-size:8.4px;line-height:8.4px;color:#fff;white-space:nowrap;-webkit-text-stroke:0.03px #fff;left:711.05px;transform-origin:100% 0;transform:scaleX(0.8050);">8,192,288.64</div>
<div style="position:absolute;top:322.75px;font-size:8.4px;line-height:8.4px;color:#2222ee;white-space:nowrap;-webkit-text-stroke:0.1px #2222ee;left:15.70px;transform-origin:0 0;transform:scaleX(0.8600);">Cash Outflows</div>
<div style="position:absolute;top:337.63px;font-size:8.4px;line-height:8.4px;color:#1c1c24;white-space:nowrap;-webkit-text-stroke:0.1px #1c1c24;left:21.60px;transform-origin:0 0;transform:scaleX(0.8600);">Invoices</div>
<div style="position:absolute;top:337.63px;font-size:8.4px;line-height:8.4px;color:#1c1c24;white-space:nowrap;-webkit-text-stroke:0.1px #1c1c24;left:231.23px;transform-origin:100% 0;transform:scaleX(0.8050);">29,236.68</div>
<div style="position:absolute;top:337.63px;font-size:8.4px;line-height:8.4px;color:#fff;white-space:nowrap;-webkit-text-stroke:0.03px #fff;left:350.55px;transform-origin:100% 0;transform:scaleX(0.8050);">0.00</div>
<div style="position:absolute;top:337.63px;font-size:8.4px;line-height:8.4px;color:#1c1c24;white-space:nowrap;-webkit-text-stroke:0.1px #1c1c24;left:448.85px;transform-origin:100% 0;transform:scaleX(0.8050);">0.00</div>
<div style="position:absolute;top:337.63px;font-size:8.4px;line-height:8.4px;color:#1c1c24;white-space:nowrap;-webkit-text-stroke:0.1px #1c1c24;left:547.15px;transform-origin:100% 0;transform:scaleX(0.8050);">0.00</div>
<div style="position:absolute;top:337.63px;font-size:8.4px;line-height:8.4px;color:#1c1c24;white-space:nowrap;-webkit-text-stroke:0.1px #1c1c24;left:645.45px;transform-origin:100% 0;transform:scaleX(0.8050);">0.00</div>
<div style="position:absolute;top:337.63px;font-size:8.4px;line-height:8.4px;color:#1c1c24;white-space:nowrap;-webkit-text-stroke:0.1px #1c1c24;left:743.75px;transform-origin:100% 0;transform:scaleX(0.8050);">0.00</div>
<div style="position:absolute;top:352.51px;font-size:8.4px;line-height:8.4px;color:#1c1c24;white-space:nowrap;-webkit-text-stroke:0.1px #1c1c24;left:21.60px;transform-origin:0 0;transform:scaleX(0.8600);">Invoices on Hold</div>
<div style="position:absolute;top:352.51px;font-size:8.4px;line-height:8.4px;color:#1c1c24;white-space:nowrap;-webkit-text-stroke:0.1px #1c1c24;left:252.25px;transform-origin:100% 0;transform:scaleX(0.8050);">0.00</div>
<div style="position:absolute;top:352.51px;font-size:8.4px;line-height:8.4px;color:#1c1c24;white-space:nowrap;-webkit-text-stroke:0.1px #1c1c24;left:350.55px;transform-origin:100% 0;transform:scaleX(0.8050);">0.00</div>
<div style="position:absolute;top:352.51px;font-size:8.4px;line-height:8.4px;color:#1c1c24;white-space:nowrap;-webkit-text-stroke:0.1px #1c1c24;left:448.85px;transform-origin:100% 0;transform:scaleX(0.8050);">0.00</div>
<div style="position:absolute;top:352.51px;font-size:8.4px;line-height:8.4px;color:#1c1c24;white-space:nowrap;-webkit-text-stroke:0.1px #1c1c24;left:547.15px;transform-origin:100% 0;transform:scaleX(0.8050);">0.00</div>
<div style="position:absolute;top:352.51px;font-size:8.4px;line-height:8.4px;color:#1c1c24;white-space:nowrap;-webkit-text-stroke:0.1px #1c1c24;left:645.45px;transform-origin:100% 0;transform:scaleX(0.8050);">0.00</div>
<div style="position:absolute;top:352.51px;font-size:8.4px;line-height:8.4px;color:#1c1c24;white-space:nowrap;-webkit-text-stroke:0.1px #1c1c24;left:743.75px;transform-origin:100% 0;transform:scaleX(0.8050);">0.00</div>
<div style="position:absolute;top:367.39px;font-size:8.4px;line-height:8.4px;color:#1c1c24;white-space:nowrap;-webkit-text-stroke:0.1px #1c1c24;left:21.60px;transform-origin:0 0;transform:scaleX(0.8600);">Purchase Orders</div>
<div style="position:absolute;top:367.39px;font-size:8.4px;line-height:8.4px;color:#1c1c24;white-space:nowrap;-webkit-text-stroke:0.1px #1c1c24;left:252.25px;transform-origin:100% 0;transform:scaleX(0.8050);">0.00</div>
<div style="position:absolute;top:367.39px;font-size:8.4px;line-height:8.4px;color:#1c1c24;white-space:nowrap;-webkit-text-stroke:0.1px #1c1c24;left:350.55px;transform-origin:100% 0;transform:scaleX(0.8050);">0.00</div>
<div style="position:absolute;top:367.39px;font-size:8.4px;line-height:8.4px;color:#1c1c24;white-space:nowrap;-webkit-text-stroke:0.1px #1c1c24;left:448.85px;transform-origin:100% 0;transform:scaleX(0.8050);">0.00</div>
<div style="position:absolute;top:367.39px;font-size:8.4px;line-height:8.4px;color:#fff;white-space:nowrap;-webkit-text-stroke:0.03px #fff;left:526.13px;transform-origin:100% 0;transform:scaleX(0.8050);">19,331.00</div>
<div style="position:absolute;top:367.39px;font-size:8.4px;line-height:8.4px;color:#fff;white-space:nowrap;-webkit-text-stroke:0.03px #fff;left:645.45px;transform-origin:100% 0;transform:scaleX(0.8050);">0.00</div>
<div style="position:absolute;top:367.39px;font-size:8.4px;line-height:8.4px;color:#fff;white-space:nowrap;-webkit-text-stroke:0.03px #fff;left:722.73px;transform-origin:100% 0;transform:scaleX(0.8050);">12,083.63</div>
<div style="position:absolute;top:382.27px;font-size:8.4px;line-height:8.4px;color:#1c1c24;white-space:nowrap;-webkit-text-stroke:0.1px #1c1c24;left:21.60px;transform-origin:0 0;transform:scaleX(0.8600);">Purchase Forecast</div>
<div style="position:absolute;top:382.27px;font-size:8.4px;line-height:8.4px;color:#1c1c24;white-space:nowrap;-webkit-text-stroke:0.1px #1c1c24;left:252.25px;transform-origin:100% 0;transform:scaleX(0.8050);">0.00</div>
<div style="position:absolute;top:382.27px;font-size:8.4px;line-height:8.4px;color:#1c1c24;white-space:nowrap;-webkit-text-stroke:0.1px #1c1c24;left:350.55px;transform-origin:100% 0;transform:scaleX(0.8050);">0.00</div>
<div style="position:absolute;top:382.27px;font-size:8.4px;line-height:8.4px;color:#1c1c24;white-space:nowrap;-webkit-text-stroke:0.1px #1c1c24;left:448.85px;transform-origin:100% 0;transform:scaleX(0.8050);">0.00</div>
<div style="position:absolute;top:382.27px;font-size:8.4px;line-height:8.4px;color:#1c1c24;white-space:nowrap;-webkit-text-stroke:0.1px #1c1c24;left:547.15px;transform-origin:100% 0;transform:scaleX(0.8050);">0.00</div>
<div style="position:absolute;top:382.27px;font-size:8.4px;line-height:8.4px;color:#fff;white-space:nowrap;-webkit-text-stroke:0.03px #fff;left:624.43px;transform-origin:100% 0;transform:scaleX(0.8050);">34,473.66</div>
<div style="position:absolute;top:382.27px;font-size:8.4px;line-height:8.4px;color:#fff;white-space:nowrap;-webkit-text-stroke:0.03px #fff;left:743.75px;transform-origin:100% 0;transform:scaleX(0.8050);">0.00</div>
<div style="position:absolute;top:412.03px;font-size:8.4px;line-height:8.4px;color:#2222ee;white-space:nowrap;-webkit-text-stroke:0.1px #2222ee;left:15.70px;transform-origin:0 0;transform:scaleX(0.8600);">Ending Cash</div>
<div style="position:absolute;top:412.03px;font-size:8.4px;line-height:8.4px;color:#1c1c24;white-space:nowrap;-webkit-text-stroke:0.1px #1c1c24;left:226.56px;transform-origin:100% 0;transform:scaleX(0.8050);">335,766.37</div>
<div style="position:absolute;top:412.03px;font-size:8.4px;line-height:8.4px;color:#fff;white-space:nowrap;-webkit-text-stroke:0.03px #fff;left:317.85px;transform-origin:100% 0;transform:scaleX(0.8050);">3,296,860.99</div>
<div style="position:absolute;top:412.03px;font-size:8.4px;line-height:8.4px;color:#fff;white-space:nowrap;-webkit-text-stroke:0.03px #fff;left:416.15px;transform-origin:100% 0;transform:scaleX(0.8050);">5,793,824.44</div>
<div style="position:absolute;top:412.03px;font-size:8.4px;line-height:8.4px;color:#fff;white-space:nowrap;-webkit-text-stroke:0.03px #fff;left:514.45px;transform-origin:100% 0;transform:scaleX(0.8050);">8,504,956.42</div>
<div style="position:absolute;top:412.03px;font-size:8.4px;line-height:8.4px;color:#fff;white-space:nowrap;-webkit-text-stroke:0.03px #fff;left:608.70px;transform-origin:100% 0;transform:scaleX(0.8050);">11,625,588.58</div>
<div style="position:absolute;top:412.03px;font-size:8.4px;line-height:8.4px;color:#fff;white-space:nowrap;-webkit-text-stroke:0.03px #fff;left:706.38px;transform-origin:100% 0;transform:scaleX(0.8050);">19,805,793.59</div>
<svg style="position:absolute;left:156.50px;top:130.5px" width="16" height="8" viewBox="0 0 16 8">
<path d="M0.1 0.4 L7.9 0.4 L5.0 4.0 L5.0 6.5 L2.9 6.5 L2.9 4.0 Z" fill="#3a3a3a"/>
<path d="M1.9 1.5 L6.1 1.5 L4.0 4.0 Z" fill="#fff"/>
<path d="M8.3 3.7 L10.3 3.7" stroke="#3a3a3a" stroke-width="1.1"/>
<rect x="10.9" y="2.1" width="4.0" height="3.2" rx="1.3" fill="none" stroke="#3a3a3a" stroke-width="1.2"/>
<rect x="10.2" y="1.2" width="1.3" height="5.2" fill="#3a3a3a"/>
</svg>
<div style="position:absolute;top:130.14px;font-size:7.4px;line-height:7.4px;color:#9b2db5;white-space:nowrap;-webkit-text-stroke:0.12px #9b2db5;left:194.91px;transform-origin:50% 0;transform:scaleX(0.9852);">March 2017</div>
<div style="position:absolute;left:195.20000000000002px;top:137.2px;width:38.5px;height:0.8px;background:#b060c8;"></div>
<svg style="position:absolute;left:255.00px;top:130.5px" width="16" height="8" viewBox="0 0 16 8">
<path d="M0.1 0.4 L7.9 0.4 L5.0 4.0 L5.0 6.5 L2.9 6.5 L2.9 4.0 Z" fill="#9b2db5"/>
<path d="M1.9 1.5 L6.1 1.5 L4.0 4.0 Z" fill="#fff"/>
<path d="M8.3 3.7 L10.3 3.7" stroke="#9b2db5" stroke-width="1.1"/>
<rect x="10.9" y="2.1" width="4.0" height="3.2" rx="1.3" fill="none" stroke="#9b2db5" stroke-width="1.2"/>
<rect x="10.2" y="1.2" width="1.3" height="5.2" fill="#9b2db5"/>
</svg>
<div style="position:absolute;top:130.14px;font-size:7.4px;line-height:7.4px;color:#9b2db5;white-space:nowrap;-webkit-text-stroke:0.12px #9b2db5;left:296.09px;transform-origin:50% 0;transform:scaleX(0.9933);">April 2017</div>
<div style="position:absolute;left:296.20000000000005px;top:137.2px;width:33.1px;height:0.8px;background:#b060c8;"></div>
<svg style="position:absolute;left:353.30px;top:130.5px" width="16" height="8" viewBox="0 0 16 8">
<path d="M0.1 0.4 L7.9 0.4 L5.0 4.0 L5.0 6.5 L2.9 6.5 L2.9 4.0 Z" fill="#9b2db5"/>
<path d="M1.9 1.5 L6.1 1.5 L4.0 4.0 Z" fill="#fff"/>
<path d="M8.3 3.7 L10.3 3.7" stroke="#9b2db5" stroke-width="1.1"/>
<rect x="10.9" y="2.1" width="4.0" height="3.2" rx="1.3" fill="none" stroke="#9b2db5" stroke-width="1.2"/>
<rect x="10.2" y="1.2" width="1.3" height="5.2" fill="#9b2db5"/>
</svg>
<div style="position:absolute;top:130.14px;font-size:7.4px;line-height:7.4px;color:#9b2db5;white-space:nowrap;-webkit-text-stroke:0.12px #9b2db5;left:394.80px;transform-origin:50% 0;transform:scaleX(0.9770);">May 2017</div>
<div style="position:absolute;left:395.175px;top:137.2px;width:31.75px;height:0.8px;background:#b060c8;"></div>
<svg style="position:absolute;left:451.60px;top:130.5px" width="16" height="8" viewBox="0 0 16 8">
<path d="M0.1 0.4 L7.9 0.4 L5.0 4.0 L5.0 6.5 L2.9 6.5 L2.9 4.0 Z" fill="#9b2db5"/>
<path d="M1.9 1.5 L6.1 1.5 L4.0 4.0 Z" fill="#fff"/>
<path d="M8.3 3.7 L10.3 3.7" stroke="#9b2db5" stroke-width="1.1"/>
<rect x="10.9" y="2.1" width="4.0" height="3.2" rx="1.3" fill="none" stroke="#9b2db5" stroke-width="1.2"/>
<rect x="10.2" y="1.2" width="1.3" height="5.2" fill="#9b2db5"/>
</svg>
<div style="position:absolute;top:130.14px;font-size:7.4px;line-height:7.4px;color:#9b2db5;white-space:nowrap;-webkit-text-stroke:0.12px #9b2db5;left:492.07px;transform-origin:50% 0;transform:scaleX(0.9258);">June 2017</div>
<div style="position:absolute;left:493.34999999999997px;top:137.2px;width:32.0px;height:0.8px;background:#b060c8;"></div>
<svg style="position:absolute;left:549.90px;top:130.5px" width="16" height="8" viewBox="0 0 16 8">
<path d="M0.1 0.4 L7.9 0.4 L5.0 4.0 L5.0 6.5 L2.9 6.5 L2.9 4.0 Z" fill="#9b2db5"/>
<path d="M1.9 1.5 L6.1 1.5 L4.0 4.0 Z" fill="#fff"/>
<path d="M8.3 3.7 L10.3 3.7" stroke="#9b2db5" stroke-width="1.1"/>
<rect x="10.9" y="2.1" width="4.0" height="3.2" rx="1.3" fill="none" stroke="#9b2db5" stroke-width="1.2"/>
<rect x="10.2" y="1.2" width="1.3" height="5.2" fill="#9b2db5"/>
</svg>
<div style="position:absolute;top:130.14px;font-size:7.4px;line-height:7.4px;color:#9b2db5;white-space:nowrap;-webkit-text-stroke:0.12px #9b2db5;left:591.81px;transform-origin:50% 0;transform:scaleX(0.9470);">July 2017</div>
<div style="position:absolute;left:592.65px;top:137.2px;width:30.0px;height:0.8px;background:#b060c8;"></div>
<svg style="position:absolute;left:648.20px;top:130.5px" width="16" height="8" viewBox="0 0 16 8">
<path d="M0.1 0.4 L7.9 0.4 L5.0 4.0 L5.0 6.5 L2.9 6.5 L2.9 4.0 Z" fill="#9b2db5"/>
<path d="M1.9 1.5 L6.1 1.5 L4.0 4.0 Z" fill="#fff"/>
<path d="M8.3 3.7 L10.3 3.7" stroke="#9b2db5" stroke-width="1.1"/>
<rect x="10.9" y="2.1" width="4.0" height="3.2" rx="1.3" fill="none" stroke="#9b2db5" stroke-width="1.2"/>
<rect x="10.2" y="1.2" width="1.3" height="5.2" fill="#9b2db5"/>
</svg>
<div style="position:absolute;top:130.14px;font-size:7.4px;line-height:7.4px;color:#9b2db5;white-space:nowrap;-webkit-text-stroke:0.12px #9b2db5;left:685.17px;transform-origin:50% 0;transform:scaleX(0.9770);">August 2017</div>
<div style="position:absolute;left:685.65px;top:137.2px;width:40.6px;height:0.8px;background:#b060c8;"></div>
<svg style="position:absolute;left:746.50px;top:130.5px" width="16" height="8" viewBox="0 0 16 8">
<path d="M0.1 0.4 L7.9 0.4 L5.0 4.0 L5.0 6.5 L2.9 6.5 L2.9 4.0 Z" fill="#9b2db5"/>
<path d="M1.9 1.5 L6.1 1.5 L4.0 4.0 Z" fill="#fff"/>
<path d="M8.3 3.7 L10.3 3.7" stroke="#9b2db5" stroke-width="1.1"/>
<rect x="10.9" y="2.1" width="4.0" height="3.2" rx="1.3" fill="none" stroke="#9b2db5" stroke-width="1.2"/>
<rect x="10.2" y="1.2" width="1.3" height="5.2" fill="#9b2db5"/>
</svg>
<div style="position:absolute;left:777px;top:129.19px;width:3.2px;overflow:hidden;font-size:8.4px;line-height:8.4px;color:#9b2db5;text-decoration:underline;white-space:nowrap;transform:scaleX(0.9);transform-origin:0 0">September 2017</div>
</body></html>
